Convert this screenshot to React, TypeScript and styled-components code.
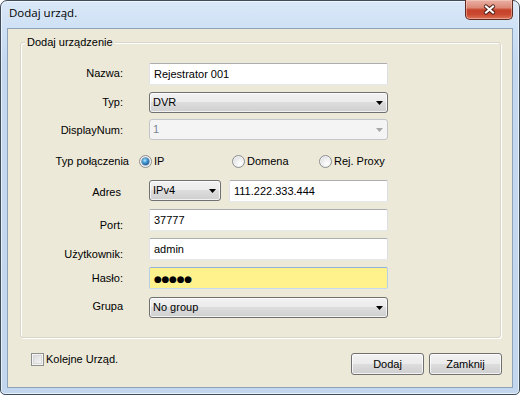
import React from "react";
import styled, { createGlobalStyle } from "styled-components";

const UI_FONT = `"Liberation Sans", Arial, sans-serif`;

const Global = createGlobalStyle`
  html, body { margin: 0; padding: 0; background: #ffffff; }
  body { font-family: ${UI_FONT}; font-size: 11px; color: #000; }
  * { box-sizing: border-box; }
`;

const Window = styled.div`
  width: 520px;
  height: 395px;
  border: 1px solid #3f4c5c;
  border-radius: 7px 7px 5px 5px;
  background: linear-gradient(to bottom, #dae8f8 0px, #cfe1f5 27px, #c4d9f0 60px, #c2d7ee 100%);
  box-shadow: inset 0 0 0 1px rgba(255, 255, 255, 0.6);
  display: flex;
  flex-direction: column;
`;

const TitleBar = styled.div`
  height: 27px;
  flex: none;
  display: flex;
  align-items: flex-start;
  justify-content: space-between;
  padding-left: 8px;
`;

const Caption = styled.div`
  font-family: "Open Sans", "Liberation Sans", sans-serif;
  font-size: 11.5px;
  line-height: 16px;
  padding-top: 4px;
  color: #000;
`;

const CloseButton = styled.div`
  width: 48px;
  height: 20px;
  margin-top: -1px;
  margin-right: 6px;
  border: 1px solid #5e2a22;
  border-top: none;
  border-radius: 0 0 5px 5px;
  background: linear-gradient(
    to bottom,
    #e9b0a4 0%,
    #dc8a78 40%,
    #c6432c 52%,
    #c9482f 75%,
    #dc7356 100%
  );
  box-shadow: inset 0 0 0 1px rgba(255, 220, 210, 0.45);
  display: flex;
  align-items: center;
  justify-content: center;
`;

const Client = styled.div`
  flex: 1;
  margin: 0 6px 6px;
  border: 1px solid #8ea2ba;
  background: #ece9d8;
  display: flex;
  flex-direction: column;
`;

const Group = styled.fieldset`
  margin: 7px 11px 0 12px;
  padding: 14px 0 19px 0;
  min-inline-size: 0;
  border: 1px solid #d8d5c9;
  border-radius: 3px;
  box-shadow: inset 1px 1px 0 #ffffff, 1px 1px 0 #ffffff;
`;

const GroupTitle = styled.legend`
  margin-left: 4px;
  padding: 0 2px;
  font-size: 11px;
  line-height: 13px;
  background: #ece9d8;
  color: #000;
`;

const FormGrid = styled.div`
  display: grid;
  grid-template-columns: 102px 239px;
  grid-template-rows: 29px 27px 31px 30px 29px 29px 29px 30px 21px;
  column-gap: 26px;
`;

const FieldLabel = styled.div<{ $top: number; $dx?: number }>`
  justify-self: end;
  align-self: start;
  margin-top: ${(p) => p.$top}px;
  margin-right: ${(p) => -(p.$dx ?? 0)}px;
  line-height: 13px;
  white-space: nowrap;
`;

const TextBox = styled.div<{ $password?: boolean }>`
  align-self: start;
  height: 22px;
  padding: 0 4px;
  border: 1px solid;
  border-radius: 2px;
  border-color: ${(p) =>
    p.$password ? "#8fb4d8 #b5cfe7 #c5daee #b5cfe7" : "#abadb3 #dbdfe6 #e3e9ef #e2e3ea"};
  background: ${(p) => (p.$password ? "#fff28c" : "#ffffff")};
  line-height: 20px;
  white-space: nowrap;
  overflow: hidden;
  flex: 1;
`;

const Dots = styled.span`
  font-family: "DejaVu Sans", sans-serif;
  font-size: 9px;
  letter-spacing: -0.3px;
  line-height: 20px;
  color: #000;
`;

const ComboBox = styled.div<{ $disabled?: boolean; $width?: number }>`
  align-self: start;
  height: 21px;
  width: ${(p) => (p.$width ? `${p.$width}px` : "auto")};
  flex: none;
  padding: 0 4px 0 3px;
  border: 1px solid ${(p) => (p.$disabled ? "#c2c5c9" : "#707070")};
  border-radius: 3px;
  background: ${(p) =>
    p.$disabled
      ? "#f4f4f4"
      : "linear-gradient(to bottom, #f2f2f2 0%, #ebebeb 50%, #dddddd 50%, #cfcfcf 100%)"};
  box-shadow: ${(p) => (p.$disabled ? "none" : "inset 0 0 0 1px rgba(255,255,255,0.7)")};
  color: ${(p) => (p.$disabled ? "#7a8594" : "#000")};
  display: flex;
  align-items: center;
  justify-content: space-between;
  line-height: 13px;
`;

const ArrowIcon = ({ disabled }: { disabled?: boolean }) => (
  <svg width="7" height="4" viewBox="0 0 7 4">
    <path d="M0 0H7L3.5 4Z" fill={disabled ? "#a8a8a8" : "#000"} />
  </svg>
);

const RadioGroup = styled.div`
  align-self: start;
  margin-top: 5px;
  margin-left: -10px;
  display: grid;
  grid-template-columns: 93px 87px auto;
`;

const RadioOption = styled.div`
  display: flex;
  align-items: center;
  gap: 2px;
  line-height: 13px;
  white-space: nowrap;
`;

const RadioCircle = styled.span`
  width: 13px;
  height: 13px;
  border-radius: 50%;
  border: 1px solid #8c8e90;
  background: radial-gradient(circle at 65% 70%, #ffffff 0%, #f0f0f0 40%, #d0d3d7 100%);
  box-shadow: inset 0 0 0 1px #f4f4f4;
  display: flex;
  align-items: center;
  justify-content: center;
  flex: none;
`;

const RadioDot = styled.span`
  width: 7px;
  height: 7px;
  border-radius: 50%;
  background: radial-gradient(circle at 40% 35%, #b9e4fb 0%, #4aa2dc 35%, #1a5f9d 70%, #0f3f6f 100%);
  box-shadow: 0 0 0 0.5px #2d5f8c;
`;

const AddressRow = styled.div`
  display: flex;
  gap: 8px;
  align-items: flex-start;
`;

const Footer = styled.div`
  margin: 15px 10px 0 23px;
  display: flex;
  justify-content: space-between;
  align-items: flex-start;
`;

const CheckOption = styled.div`
  display: flex;
  align-items: center;
  gap: 2px;
  line-height: 13px;
`;

const CheckBox = styled.span`
  width: 13px;
  height: 13px;
  border: 1px solid #8e8f8f;
  background: linear-gradient(135deg, #d3d3d3 0%, #e8e8e8 50%, #fafafa 100%);
  box-shadow: inset 0 0 0 1px #f4f4f4, inset 0 0 0 2px #d9d9d9;
  flex: none;
`;

const ButtonRow = styled.div`
  display: flex;
  gap: 5px;
`;

const PushButton = styled.div`
  width: 73px;
  height: 22px;
  border: 1px solid #707070;
  border-radius: 3px;
  background: linear-gradient(to bottom, #f2f2f2 0%, #ebebeb 50%, #dddddd 50%, #cfcfcf 100%);
  box-shadow: inset 0 0 0 1px rgba(255, 255, 255, 0.75);
  display: flex;
  align-items: center;
  justify-content: center;
  line-height: 13px;
  color: #000;
`;

const CloseGlyph = () => (
  <svg width="13" height="11" viewBox="0 0 13 11">
    <path d="M3 2.5L10 8.5M10 2.5L3 8.5" stroke="#4a1a12" strokeWidth="4.2" strokeLinecap="round" fill="none" />
    <path d="M3 2.5L10 8.5M10 2.5L3 8.5" stroke="#ffffff" strokeWidth="2.2" strokeLinecap="square" fill="none" />
  </svg>
);

export default function App() {
  return (
    <>
      <Global />
      <Window>
        <TitleBar>
          <Caption>Dodaj urząd.</Caption>
          <CloseButton>
            <CloseGlyph />
          </CloseButton>
        </TitleBar>
        <Client>
          <Group>
            <GroupTitle>Dodaj urządzenie</GroupTitle>
            <FormGrid>
              <FieldLabel $top={4}>Nazwa:</FieldLabel>
              <TextBox>Rejestrator 001</TextBox>

              <FieldLabel $top={4}>Typ:</FieldLabel>
              <ComboBox>
                <span>DVR</span>
                <ArrowIcon />
              </ComboBox>

              <FieldLabel $top={5}>DisplayNum:</FieldLabel>
              <ComboBox $disabled>
                <span>1</span>
                <ArrowIcon disabled />
              </ComboBox>

              <FieldLabel $top={5} $dx={6}>Typ połączenia</FieldLabel>
              <RadioGroup>
                <RadioOption>
                  <RadioCircle>
                    <RadioDot />
                  </RadioCircle>
                  <span>IP</span>
                </RadioOption>
                <RadioOption>
                  <RadioCircle />
                  <span>Domena</span>
                </RadioOption>
                <RadioOption>
                  <RadioCircle />
                  <span>Rej. Proxy</span>
                </RadioOption>
              </RadioGroup>

              <FieldLabel $top={6} $dx={-2}>Adres</FieldLabel>
              <AddressRow>
                <ComboBox $width={72}>
                  <span>IPv4</span>
                  <ArrowIcon />
                </ComboBox>
                <TextBox>111.222.333.444</TextBox>
              </AddressRow>

              <FieldLabel $top={10}>Port:</FieldLabel>
              <TextBox>37777</TextBox>

              <FieldLabel $top={10}>Użytkownik:</FieldLabel>
              <TextBox>admin</TextBox>

              <FieldLabel $top={5}>Hasło:</FieldLabel>
              <TextBox $password>
                <Dots>●●●●●</Dots>
              </TextBox>

              <FieldLabel $top={3}>Grupa</FieldLabel>
              <ComboBox>
                <span>No group</span>
                <ArrowIcon />
              </ComboBox>
            </FormGrid>
          </Group>
          <Footer>
            <CheckOption>
              <CheckBox />
              <span>Kolejne Urząd.</span>
            </CheckOption>
            <ButtonRow>
              <PushButton>Dodaj</PushButton>
              <PushButton>Zamknij</PushButton>
            </ButtonRow>
          </Footer>
        </Client>
      </Window>
    </>
  );
}
